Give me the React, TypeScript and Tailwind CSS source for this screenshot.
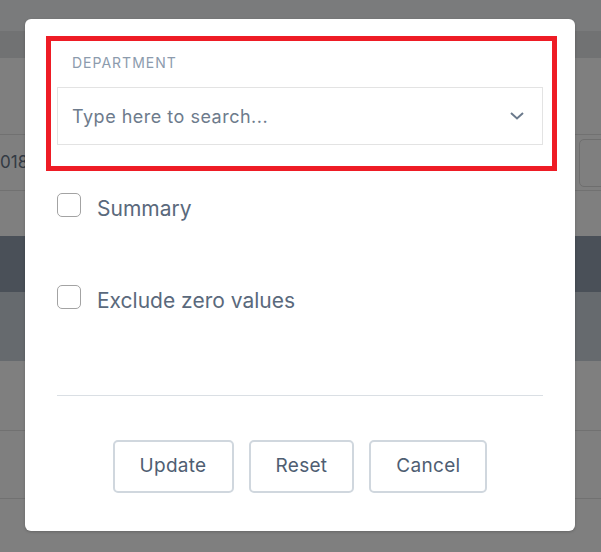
const font = { fontFamily: "Inter, 'Noto Sans', sans-serif" };

const Checkbox = ({ label }: { label: string }) => (
  <label className="flex items-start gap-4">
    <span className="size-6 shrink-0 rounded-[5px] border border-[#a3a3a3] bg-white" />
    <span className="mt-[4px] text-[21px] leading-6 text-[#5a697c]">{label}</span>
  </label>
);

const Button = ({ children }: { children: string }) => (
  <button className="h-[53px] rounded-[5px] border-2 border-[#d0d7de] bg-white px-[25px] text-[19px] text-[#4f5e72] tracking-[0.3px]">
    {children}
  </button>
);

export default function App() {
  return (
    <div className="relative h-[552px] w-[601px] overflow-hidden bg-[#7f7f7f]" style={font}>
      {/* page behind the overlay */}
      <div className="h-[31px] bg-[#7a7b7c]" />
      <div className="h-[27px] bg-[#717273]" />
      <div className="h-[77px] border-b border-[#717171]" />
      <div className="flex h-[56px] items-center justify-between border-b border-[#717171]">
        <span className="text-[17px] text-[#333a44]">018</span>
        <div className="mr-[-10px] h-[48px] w-[32px] rounded-[5px] border border-[#6e6e6e]" />
      </div>
      <div className="h-[45px]" />
      <div className="h-[56px] bg-[#4a5058]" />
      <div className="h-[69px] bg-[#666a6e]" />
      <div className="h-[70px] border-b border-[#717171]" />
      <div className="h-[68px] border-b border-[#717171]" />

      {/* modal */}
      <div className="absolute left-[25px] top-[19px] flex h-[512px] w-[550px] flex-col rounded-[6px] bg-white px-8 pt-[36px] shadow-[0_1px_3px_rgba(0,0,0,0.2)]">
        <div className="pl-[15px] text-[14px] leading-4 uppercase tracking-[1px] text-[#8c9bad]">Department</div>
        <div className="mt-[16px] flex h-[58px] items-center justify-between border border-[#e3e3e3] pl-[14px] pr-[18px]">
          <span className="text-[18px] text-[#6d7b8c] tracking-[0.5px]">Type here to search...</span>
          <svg width="14" height="8" viewBox="0 0 14 8" fill="none" stroke="#6b7a8c" strokeWidth="2">
            <polyline points="1,1 7,6.5 13,1" />
          </svg>
        </div>

        <div className="mt-[48px]">
          <Checkbox label="Summary" />
        </div>
        <div className="mt-[64px]">
          <Checkbox label="Exclude zero values" />
        </div>

        <div className="mt-[82px] border-t border-[#dadfe4]" />

        <div className="mt-[44px] flex justify-center gap-[15px]">
          <Button>Update</Button>
          <Button>Reset</Button>
          <Button>Cancel</Button>
        </div>

        <div className="pointer-events-none absolute left-[21px] top-[17px] h-[135px] w-[511px] border-[5px] border-[#ee1c25]" />
      </div>
    </div>
  );
}
